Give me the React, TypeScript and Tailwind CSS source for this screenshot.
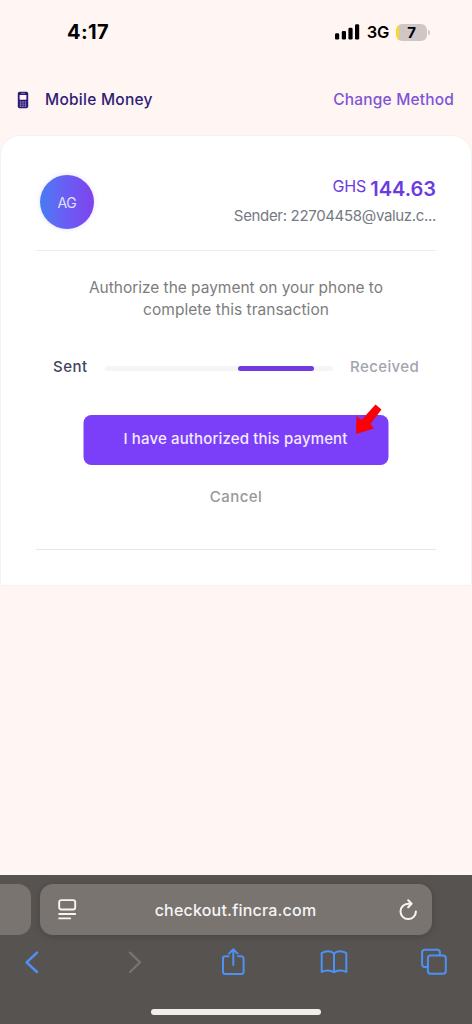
import type { ReactNode } from 'react';

function PhoneIcon() {
  return (
    <svg width="12" height="18" viewBox="0 0 12 18" className="block">
      <rect x="0.8" y="0.8" width="10.4" height="16.4" rx="1.8" fill="#2b1a78" />
      <rect x="2.6" y="4" width="6.8" height="4.8" rx="0.6" fill="#fff5f3" />
      <rect x="4" y="1.9" width="4" height="0.7" fill="#fff5f3" opacity="0.6" />
      {[10.5, 12.6, 14.7].map((y) =>
        [2.9, 5.3, 7.7].map((x) => (
          <rect key={`${x}-${y}`} x={x} y={y} width="1.4" height="1" fill="#fff5f3" opacity="0.75" />
        )),
      )}
    </svg>
  );
}

function StatusBar() {
  return (
    <header className="flex h-16 items-center justify-between pr-[42px] pl-[67px] text-black">
      <span className="text-[20px] leading-6 font-bold tracking-[0.4px]">4:17</span>
      <div className="flex items-center">
        <svg width="25" height="16" viewBox="0 0 25 16">
          <rect x="0" y="9.3" width="4.2" height="6.2" rx="1.3" />
          <rect x="6.8" y="6.9" width="4.2" height="8.6" rx="1.3" />
          <rect x="13.4" y="3.8" width="4.2" height="11.7" rx="1.3" />
          <rect x="20" y="0.3" width="4.2" height="15.2" rx="1.3" />
        </svg>
        <span className="ml-[7px] text-[16.5px] leading-6 font-semibold tracking-[-0.3px]">3G</span>
        <div className="ml-[7px] flex h-[17px] w-[31px] items-center justify-center rounded-[6px] bg-[linear-gradient(to_right,#f5d832_3px,#cfc6c6_3px)] text-[15px] leading-[17px] font-bold">
          7
        </div>
        <span className="ml-px h-[5px] w-[2px] rounded-r-full bg-[#cfc6c6]" />
      </div>
    </header>
  );
}

function AddressBar() {
  return (
    <div className="flex h-[51px] gap-[9px]">
      <div className="w-[31px] rounded-r-[13px] bg-[#797470]" />
      <div className="flex w-[392px] items-center justify-between rounded-[13px] bg-[#797470] pr-[14px] pl-[18px] text-[#f7f5f4] shadow-[0_1px_7px_rgba(0,0,0,0.18)]">
        <svg width="19" height="21" viewBox="0 0 19 21" fill="none" stroke="currentColor" strokeWidth="1.9" strokeLinecap="round">
          <rect x="1.2" y="1.1" width="16" height="9.4" rx="2" />
          <path d="M1.2 15h16M1.2 19.4h11" />
        </svg>
        <span className="-translate-x-[2px] text-[16px] font-medium tracking-[0.2px]">checkout.fincra.com</span>
        <svg width="20" height="22" viewBox="0 0 20 22" fill="none" stroke="currentColor" strokeWidth="2" strokeLinecap="round" strokeLinejoin="round">
          <path d="M13 4.700H10.200a7.700 7.700 0 1 0 7.700 7.700" />
          <path d="M10.200 1.200 13.600 4.700 10.200 8.200" />
        </svg>
      </div>
    </div>
  );
}

function NavIcon({ children, muted = false }: { children: ReactNode; muted?: boolean }) {
  return (
    <svg
      width="30"
      height="30"
      viewBox="0 0 30 30"
      fill="none"
      stroke={muted ? '#77736f' : '#4c91f5'}
      strokeWidth="2"
      strokeLinecap="round"
      strokeLinejoin="round"
    >
      {children}
    </svg>
  );
}

function BrowserChrome() {
  return (
    <footer className="flex h-[149px] flex-col bg-[#575350] pt-[9px]">
      <AddressBar />
      <nav className="mt-[12px] flex justify-between pr-[23px] pl-[17px]">
        <NavIcon>
          <path d="M20 5.700 9.600 15.300 20 25" strokeWidth="2.500" />
        </NavIcon>
        <NavIcon muted>
          <path d="M12 5.700 22 15.300 12 25" strokeWidth="2.400" />
        </NavIcon>
        <NavIcon>
          <path d="M10.500 9.300H7.300a2.300 2.300 0 0 0-2.300 2.300v13.200a2.300 2.300 0 0 0 2.300 2.300h16a2.300 2.300 0 0 0 2.300-2.300v-13.200a2.300 2.300 0 0 0-2.300-2.300h-3.200" />
          <path d="M15.300 18V2.500M11 6.600 15.300 2.300l4.300 4.300" />
        </NavIcon>
        <NavIcon>
          <path d="M15 6.600C12.300 3.400 6.400 3.600 2.700 6v19c3.600-2.200 9-2 12.300.300 3.300-2.300 8.700-2.500 12.300-.300V6C23.600 3.600 17.700 3.400 15 6.600v18.700" />
        </NavIcon>
        <NavIcon>
          <path d="M8.500 20H5.500a2.400 2.400 0 0 1-2.400-2.400V5.200A2.400 2.400 0 0 1 5.500 2.800h13a2.400 2.400 0 0 1 2.400 2.400v3" />
          <rect x="8.900" y="8.500" width="17.900" height="18.200" rx="2.600" />
        </NavIcon>
      </nav>
      <div className="mt-[32px] h-[6px] w-[170px] self-center rounded-full bg-[#f1efee]" />
    </footer>
  );
}

function PaymentCard() {
  return (
    <main className="flex h-[451px] flex-col rounded-t-[20px] border border-[#f4f3f2] bg-white px-[35px]">
      <section className="flex h-[115px] justify-between border-b border-[#ececec] pt-[39px] pl-1">
        <div className="flex size-[54px] items-center justify-center rounded-full bg-linear-to-r from-[#467bf3] via-[#6a5cf4] to-[#7e42ec] text-[14px] tracking-[-0.3px] text-[#e3e0ff] shadow-[0_0_5px_rgba(110,80,240,0.2)]">
          AG
        </div>
        <div className="flex flex-col items-end">
          <div className="flex items-start gap-1 text-[#6c3be0]">
            <span className="pt-px text-[16px] leading-5 tracking-[-0.1px]">GHS</span>
            <span className="text-[20px] leading-7 font-semibold">144.63</span>
          </div>
          <p className="mt-px text-[15px] leading-6 tracking-[-0.33px] text-[#747983]">
            Sender: 22704458@valuz.c...
          </p>
        </div>
      </section>

      <section className="flex flex-1 flex-col items-center pt-[26px]">
        <p className="text-center text-[15.500px] leading-[22px] text-[#7d7d7d]">
          <span className="block tracking-[-0.03px]">Authorize the payment on your phone to</span>
          <span className="block tracking-[0.05px]">complete this transaction</span>
        </p>
        <div className="mt-[35px] flex h-6 items-center text-[15px]">
          <span className="w-[52px] -translate-y-px font-medium tracking-[0.5px] text-[#41455b]">Sent</span>
          <div className="mt-px h-[5px] w-[228px] rounded-full bg-[#f5f5f5]">
            <div className="ml-[133px] h-[5px] w-[76px] rounded-full bg-[#713be0]" />
          </div>
          <span className="w-[86px] -translate-y-px pl-[17px] font-medium tracking-[0.4px] text-[#a3a4ae]">Received</span>
        </div>
        <div className="relative mt-[35px]">
          <button className="block h-[50px] w-[305px] -translate-x-[0.5px] rounded-[8px] bg-[#7b3ffa] pb-[2px] text-[15px] font-medium tracking-[0.14px] text-[#f3eaff]">
            I have authorized this payment
          </button>
          <svg width="28" height="32" viewBox="0 0 28 32" className="absolute top-[-11px] left-[270px]" fill="#fb0007">
            <path d="M21.500 0.500 27.500 5.500 16.500 20 20 24.500 2 30 2.500 12 7.500 16Z" />
          </svg>
        </div>
        <button className="mt-[20px] text-[15px] leading-6 font-medium tracking-[0.45px] text-[#989898]">Cancel</button>
      </section>
      <div className="mb-[35px] h-px bg-[#e6e6e6]" />
    </main>
  );
}

export default function App() {
  return (
    <div className="flex h-[1024px] w-[472px] flex-col overflow-hidden bg-[#fff5f3] font-[Inter,sans-serif]">
      <StatusBar />
      <div className="flex h-[71px] items-center justify-between pr-[18px] pl-[17px] text-[15.500px] font-medium">
        <div className="flex items-center gap-[16px] text-[#2e1c73]">
          <PhoneIcon />
          <span className="tracking-[0.25px]">Mobile Money</span>
        </div>
        <a className="tracking-[0.17px] text-[#7e55d5]">Change Method</a>
      </div>
      <PaymentCard />
      <div className="flex-1" />
      <BrowserChrome />
    </div>
  );
}
